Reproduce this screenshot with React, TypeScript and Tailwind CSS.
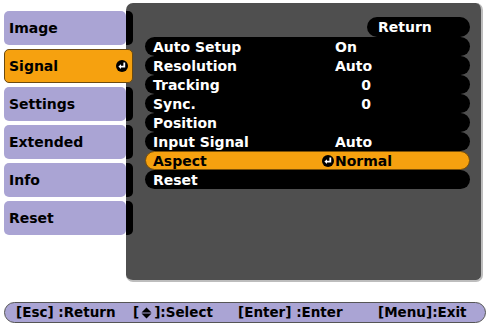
import React from 'react'

const tabs = ['Image', 'Signal', 'Settings', 'Extended', 'Info', 'Reset']

const rows: { label: string; value?: string; numeric?: boolean; enter?: boolean }[] = [
  { label: 'Auto Setup', value: 'On' },
  { label: 'Resolution', value: 'Auto' },
  { label: 'Tracking', value: '0', numeric: true },
  { label: 'Sync.', value: '0', numeric: true },
  { label: 'Position' },
  { label: 'Input Signal', value: 'Auto' },
  { label: 'Aspect', value: 'Normal', enter: true },
  { label: 'Reset' },
]

function EnterIcon({ size = 12 }: { size?: number }) {
  return (
    <svg width={size} height={size} viewBox="0 0 12 12">
      <circle cx="6" cy="6" r="6" fill="#000" />
      <path d="M8.3 2.6 V6.6 H4.2" stroke="#fff" strokeWidth="1.8" fill="none" />
      <path d="M2.4 6.6 L5 4.3 V8.9 Z" fill="#fff" />
    </svg>
  )
}

function UpDownIcon() {
  return (
    <svg width="11" height="12" viewBox="0 0 11 12">
      <path d="M5.5 0.5 L10.5 5.4 H0.5 Z" fill="#000" />
      <path d="M5.5 11.5 L10.5 6.6 H0.5 Z" fill="#000" />
    </svg>
  )
}

export default function App() {
  const font = { fontFamily: '"DejaVu Sans", Verdana, sans-serif' }

  return (
    <div className="w-[490px] h-[328px] bg-white pt-[3px] overflow-hidden" style={font}>
      <div className="flex h-[279px]">
        {/* Tabs */}
        <div className="relative z-10 ml-[4px] mt-[8px] flex w-[129px] flex-col gap-[4px]">
          {tabs.map((t) => {
            const active = t === 'Signal'
            return active ? (
              <div
                key={t}
                className="flex h-[34px] items-center justify-between rounded-[5px] border border-[#6b4a10] bg-[#f6a10f] pl-[4px] pr-[4px] text-[14px] font-bold text-black"
              >
                <span>{t}</span>
                <EnterIcon />
              </div>
            ) : (
              <div key={t} className="flex h-[34px]">
                <div className="flex w-[122px] items-center rounded-[5px] bg-[#aaa4d4] pl-[5px] text-[14px] font-bold text-black">
                  {t}
                </div>
                <div className="w-[7px] rounded-r-[5px] bg-black" />
              </div>
            )
          })}
        </div>

        {/* Main panel */}
        <div className="-ml-[7px] flex w-[357px] flex-col rounded-[7px] border-r-2 border-b-2 border-[#bdbdbd] bg-[#4f4f4f] pt-[14px] pl-[19px] pr-[11px]">
          <div className="flex justify-end">
            <div className="flex h-[20px] w-[103px] items-center rounded-full bg-black pl-[11px] text-[14px] font-bold text-white">
              Return
            </div>
          </div>
          <div className="flex flex-col">
            {rows.map((r) => {
              const sel = r.label === 'Aspect'
              return (
                <div
                  key={r.label}
                  className={
                    sel
                      ? 'flex h-[19px] items-center rounded-full border border-[#7a5008] bg-[#f6a10f] pl-[7px] text-[14px] font-bold leading-none text-black'
                      : 'flex h-[19px] items-center rounded-full bg-black pl-[8px] text-[14px] font-bold leading-none text-white'
                  }
                >
                  <div className="w-[169px]">{r.label}</div>
                  <div className="flex w-[13px] items-center">{r.enter && <EnterIcon />}</div>
                  {r.value && (
                    <div className={r.numeric ? 'w-[36px] text-right' : ''}>{r.value}</div>
                  )}
                </div>
              )
            })}
          </div>
        </div>
      </div>

      {/* Bottom help bar */}
      <div className="ml-[4px] mt-[20px] flex h-[21px] w-[482px] items-center rounded-full border border-[#555] bg-[#aaa4d4] pl-[11px] text-[13.5px] font-bold text-black">
        <span className="w-[117px]">[Esc] :Return</span>
        <span className="flex w-[105px] items-center">
          [<span className="mx-[2px] flex items-center"><UpDownIcon /></span>]:Select
        </span>
        <span className="w-[140px]">[Enter] :Enter</span>
        <span>[Menu]:Exit</span>
      </div>
    </div>
  )
}
